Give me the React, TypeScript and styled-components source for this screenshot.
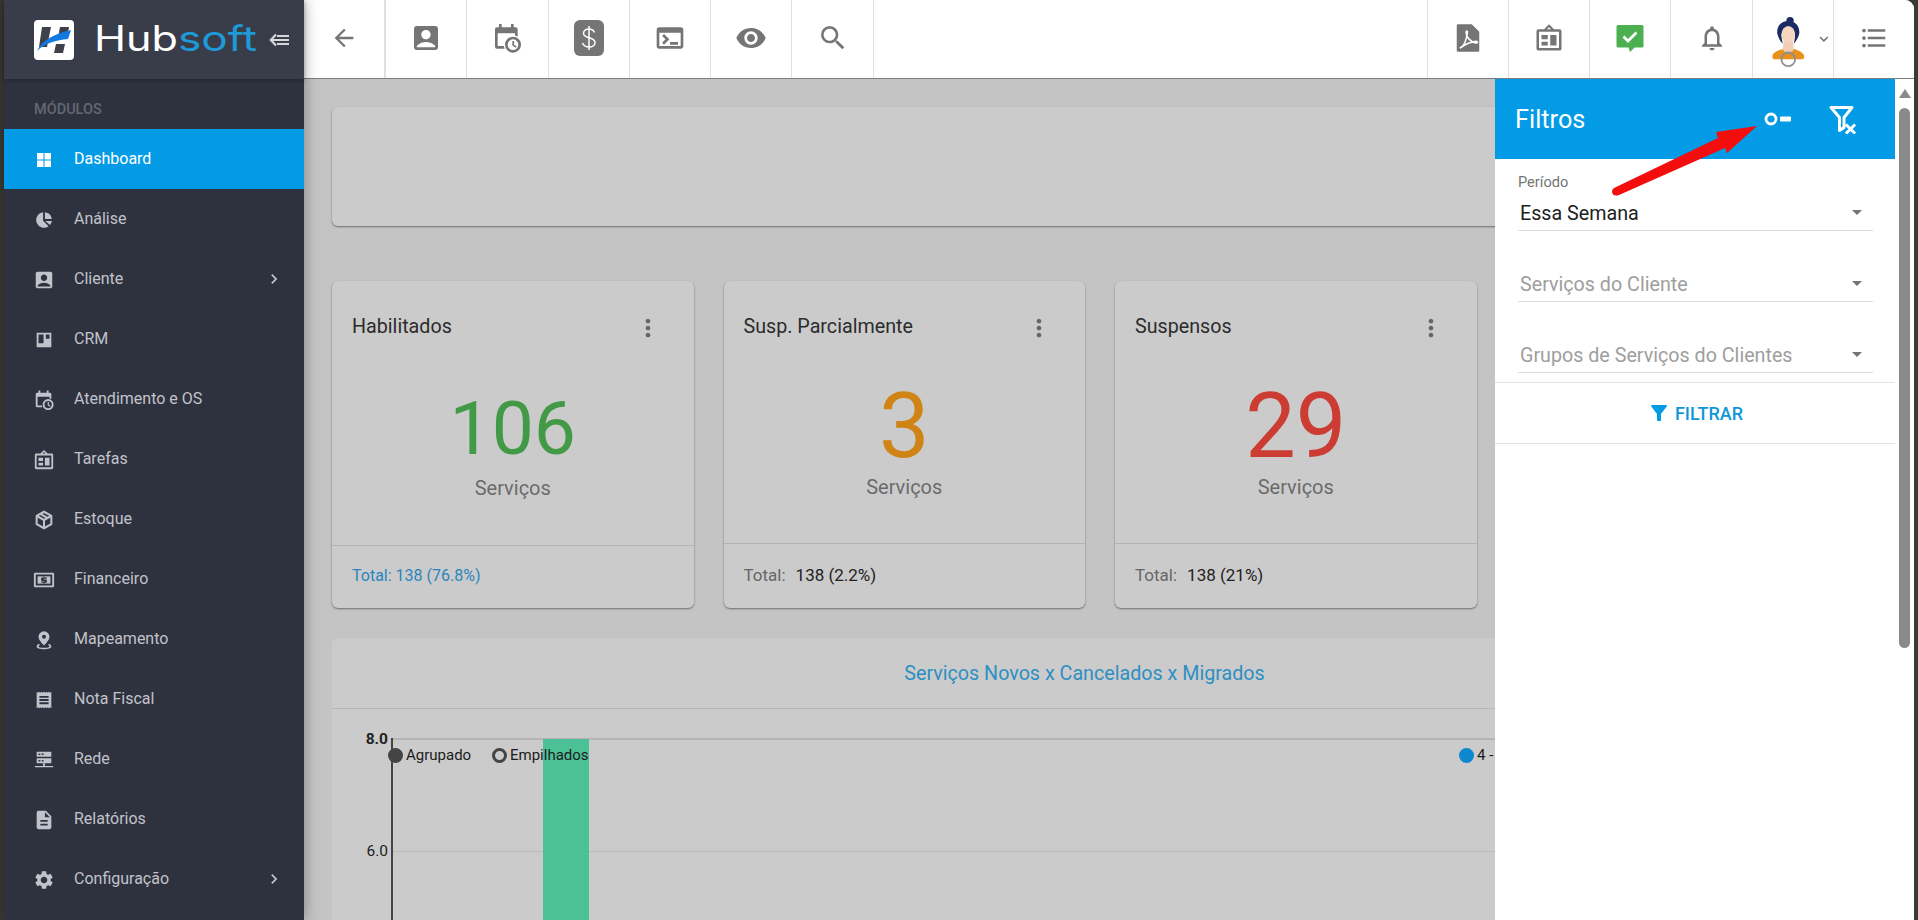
import React from "react";
import styled, { createGlobalStyle } from "styled-components";
import {
  MdArrowBack, MdAccountBox, MdTerminal, MdVisibility, MdSearch,
  MdNotificationsNone, MdFormatListBulleted, MdKeyboardArrowDown, MdChevronRight,
  MdDescription, MdSettings, MdFilterAlt, MdMoreVert, MdArrowDropDown,
} from "react-icons/md";

const Global = createGlobalStyle`
  html, body { margin: 0; padding: 0; height: 100%; overflow: hidden; background: #3a3a36; }
  * { box-sizing: border-box; }
  #root { height: 100%; font-family: Roboto, "Liberation Sans", sans-serif; }
`;

const Shell = styled.div`
  width: 1918px; height: 920px; display: flex; overflow: hidden; background: #3a3a36;
  padding: 0 4px;
`;
const Sidebar = styled.aside`
  width: 300px; flex: none; height: 920px; background: #2e323f; position: relative; z-index: 3;
  box-shadow: 0 0 14px rgba(0,0,0,.35); display: flex; flex-direction: column;
`;
const Brand = styled.div`
  height: 79px; flex: none; background: #393d4a; display: flex; align-items: center; padding-left: 30px;
  box-shadow: 0 1px 4px rgba(0,0,0,.3);
`;
const Collapse = styled.div`margin-left: 11px; margin-top: 1px; display: flex;`;
const SectionLabel = styled.div`
  height: 50px; padding: 23px 0 0 30px; font-size: 14.5px; line-height: 16px; font-weight: 500; color: #646772;
`;
const NavItem = styled.div<{ $active?: boolean }>`
  height: 60px; flex: none; display: flex; align-items: center; padding-left: 29px; padding-right: 20px;
  background: ${(p) => (p.$active ? "#039be5" : "transparent")};
  color: ${(p) => (p.$active ? "#fff" : "#c1c3ca")};
  font-size: 16px;
  svg.nav { width: 22px; height: 22px; flex: none; margin-top: 2px; }
`;
const NavText = styled.span`margin-left: 19px; flex: 1; position: relative; top: -1px;`;

const Main = styled.div`flex: 1; min-width: 0; display: flex; flex-direction: column; background: #fff; border-top-right-radius: 9px; overflow: hidden;`;
const Topbar = styled.header`
  height: 79px; flex: none; display: flex; background: #fff; border-bottom: 1px solid #7d7d7d;
`;
const TopCell = styled.div<{ $w?: number; $thick?: boolean }>`
  width: ${(p) => p.$w ?? 81.3}px; flex: none; height: 100%; display: flex; align-items: center; justify-content: center;
  border-right: ${(p) => (p.$thick ? 2 : 1)}px solid #e0e0e0; color: #757575; padding-bottom: 2px;
`;
const AvatarCell = styled(TopCell)`
  justify-content: flex-start; padding: 0 0 0 17px;
  svg:first-child { margin-top: 6px; }
  svg + svg { margin-left: 9px; }
`;
const TopSpacer = styled.div`flex: 1; border-right: 1px solid #e0e0e0;`;
const LastCell = styled.div`width: 80px; flex: none; display: flex; align-items: center; justify-content: center; color: #757575; padding-bottom: 2px;`;

const Body = styled.div`flex: 1; display: flex; min-height: 0;`;
const Content = styled.div`
  flex: 1; min-width: 0; position: relative; background: #c4c4c4; overflow: hidden; padding: 28px 0 0 28px;
`;
const Card = styled.section`
  background: #cbcbcb; border-radius: 6px; box-shadow: 0 1px 2px rgba(0,0,0,.45);
`;
const EmptyCard = styled(Card)`height: 119px; width: 1560px;`;
const CardRow = styled.div`display: flex; gap: 30px; margin-top: 55px;`;
const StatCard = styled(Card)`width: 361.5px; height: 327px; display: flex; flex-direction: column;`;
const StatHead = styled.div`height: 90px; flex: none; padding: 35px 20px 0 20px; display: flex; justify-content: space-between; align-items: flex-start;`;
const StatTitle = styled.div`font-size: 19.7px; line-height: 22px; color: #2c2c2c;`;
const Dots = styled.div`color: #666; margin-right: 12px; margin-top: -2px; display: flex;`;
const StatBody = styled.div`flex: 1; display: flex; flex-direction: column; align-items: center;`;
const StatValue = styled.div<{ $color: string; $size: number; $top: number }>`
  font-size: ${(p) => p.$size}px; line-height: 88px; font-weight: 400; color: ${(p) => p.$color}; margin-top: ${(p) => p.$top}px;
`;
const StatUnit = styled.div`font-size: 20px; line-height: 24px; color: #6b6b6b; margin-top: 4px;`;
const StatFoot = styled.div<{ $link?: boolean }>`
  height: ${(p) => (p.$link ? 63 : 65)}px; flex: none; border-top: 1px solid #b3b3b3;
  padding: ${(p) => (p.$link ? 21 : 22)}px 20px 0; font-size: ${(p) => (p.$link ? 16 : 17)}px; line-height: 18px;
  color: ${(p) => (p.$link ? "#2a86bd" : "#222")};
  span { color: #666; margin-right: 10px; }
`;
const ChartCard = styled(Card)`width: 1560px; height: 400px; margin-top: 30px; box-shadow: none;`;
const ChartHead = styled.div`
  height: 71px; border-bottom: 1px solid #b6b6b6; font-size: 19.7px; color: #2e8fc2; display: flex; align-items: center; justify-content: center; padding-right: 55px;
`;
const Plot = styled.div`position: relative; height: 330px; margin-top: -1px;`;
const GridLine = styled.div<{ $top: number; $major?: boolean }>`
  position: absolute; left: 60px; right: 0; top: ${(p) => p.$top}px; border-top: ${(p) => (p.$major ? 2 : 1)}px solid ${(p) => (p.$major ? "#b5b5b5" : "#b9b9b9")};
`;
const AxisLabel = styled.div<{ $top: number; $bold?: boolean }>`
  position: absolute; right: calc(100% - 56px); top: ${(p) => p.$top}px; font-size: 15.5px; line-height: 18px; color: #222; font-weight: ${(p) => (p.$bold ? 700 : 400)};
`;
const Axis = styled.div`position: absolute; left: 59px; top: 30px; bottom: 0; width: 2px; background: #444;`;
const Bar = styled.div`position: absolute; left: 211px; width: 46px; top: 31px; bottom: 0; background: #4cc198;`;
const Legend = styled.div<{ $left: number }>`
  position: absolute; left: ${(p) => p.$left}px; top: 38px; display: flex; align-items: center; gap: 3px; font-size: 15px; line-height: 18px; color: #1c1c1c; white-space: nowrap;
`;
const Dot = styled.i<{ $fill?: string; $ring?: boolean }>`
  width: 15px; height: 15px; border-radius: 50%; display: block; background: ${(p) => (p.$ring ? "transparent" : p.$fill)};
  border: ${(p) => (p.$ring ? "3px solid #444" : "none")};
`;

const Panel = styled.aside`
  position: absolute; top: 0; right: 0; width: 400px; bottom: 0; background: #fff; display: flex; flex-direction: column;
`;
const PanelHead = styled.div`
  height: 80px; flex: none; background: #039be5; color: #fff; display: flex; align-items: center; padding-left: 20px; font-size: 25.300px;
`;
const PanelTitle = styled.div`flex: 1;`;
const PanelIcon = styled.div<{ $mr: number }>`display: flex; margin-right: ${(p) => p.$mr}px;`;
const Form = styled.div`padding: 0 22px 0 23px;`;
const Field = styled.div<{ $h: number }>`
  height: ${(p) => p.$h}px; border-bottom: 1px solid #dcdcdc; position: relative; display: flex; flex-direction: column; justify-content: flex-end;
`;
const FieldLabel = styled.div`font-size: 14.600px; line-height: 16px; color: #757575; position: absolute; top: 15px; left: 0;`;
const FieldValue = styled.div<{ $muted?: boolean }>`
  font-size: 19.700px; line-height: 22px; padding: 0 0 5px 2px; color: ${(p) => (p.$muted ? "#9e9e9e" : "#212121")};
`;
const Caret = styled.div`position: absolute; right: 4px; bottom: 6px; color: #757575; display: flex;`;
const FilterBtn = styled.div`
  margin-top: 9px; height: 62px; border-top: 1px solid #e4e4e4; border-bottom: 1px solid #e4e4e4; display: flex; align-items: center; justify-content: center; gap: 4px;
  color: #0f96d8; font-size: 18px; font-weight: 500;
  svg { color: #039be5; }
`;

const Scroll = styled.div`width: 19px; flex: none; background: #fff; display: flex; flex-direction: column; align-items: center; padding-top: 10px;`;
const ScrollUp = styled.div`width: 0; height: 0; border-left: 6px solid transparent; border-right: 6px solid transparent; border-bottom: 9px solid #8a8a8a;`;
const Thumb = styled.div`width: 11px; height: 540px; margin-top: 10px; background: #8a8a8a; border-radius: 6px;`;

const ArrowLayer = styled.svg`position: absolute; left: 0; top: 0; z-index: 10; pointer-events: none;`;

const CalClock = ({ size = 30 }: { size?: number }) => (
  <svg className="nav" width={size} height={size} viewBox="0 0 24 24" fill="currentColor">
    <path d="M6 1.500h2V4h7V1.500h2V4h1.500A1.500 1.500 0 0 1 20 5.500V11a7 7 0 0 0-2-.6V8.500H5V18h4.600c.1.700.4 1.400.7 2H4.500A1.500 1.500 0 0 1 3 18.500v-13A1.500 1.500 0 0 1 4.500 4H6z" />
    <path fillRule="evenodd" d="M16.500 11a6 6 0 1 0 0 12 6 6 0 0 0 0-12zm0 2a4 4 0 1 1 0 8 4 4 0 0 1 0-8z" />
    <path d="M16 14.200h1.300v2.900l2 1.300-.7 1-2.600-1.700z" />
  </svg>
);
const Tasks = ({ size = 30 }: { size?: number }) => (
  <svg className="nav" width={size} height={size} viewBox="0 0 24 24" fill="currentColor">
    <path fillRule="evenodd" d="M12 1l4 4h4.500A1.500 1.500 0 0 1 22 6.500v14a1.500 1.500 0 0 1-1.500 1.500h-17A1.500 1.500 0 0 1 2 20.500v-14A1.500 1.500 0 0 1 3.500 5H8zm0 2.400L10.400 5h3.200zM4 7v13h16V7z" />
    <path d="M6 9.500h5V13H6zM6 15h5v3H6zM13 9.500h5V18h-5z" />
  </svg>
);
const Money = () => (
  <svg className="nav" viewBox="0 0 24 24" fill="currentColor">
    <path fillRule="evenodd" d="M2.500 4h19A1.500 1.500 0 0 1 23 5.500v13a1.500 1.500 0 0 1-1.500 1.500h-19A1.500 1.500 0 0 1 1 18.500v-13A1.500 1.500 0 0 1 2.500 4zM3 6v12h18V6z" />
    <path d="M5 8h14v8H5z" />
    <path fill="#2e323f" d="M11.300 8.500h1.400v.9H15v1.300h-3.600v.7h3a.7.7 0 0 1 .7.7v2.200a.7.7 0 0 1-.7.700h-1.700v.9h-1.400v-.9H9v-1.300h3.600v-.7h-3a.7.7 0 0 1-.7-.7v-2.200a.7.7 0 0 1 .7-.7h1.700z" />
  </svg>
);
const DashIcon = () => (
  <svg className="nav" viewBox="0 0 22 22" fill="currentColor">
    <path d="M4 4h6.500v6.500H4zM11.500 4H18v6.500h-6.500zM4 11.500h6.500V18H4zM11.500 11.500H18V18h-6.500z" />
  </svg>
);
const PieIcon = () => (
  <svg className="nav" viewBox="0 0 24 24" fill="currentColor">
    <path d="M13 3.500a8.500 8.500 0 0 1 7.500 7.500H13z" />
    <path d="M11 3.500v9.300l6 6A8.500 8.500 0 1 1 11 3.500z" />
    <path d="M13.500 13h7a8.500 8.500 0 0 1-2 4.500z" />
  </svg>
);
const BoardIcon = () => (
  <svg className="nav" viewBox="0 0 24 24" fill="currentColor">
    <path fillRule="evenodd" d="M4 4h16v16H4zM6 6v9.500h5.500V6zM14 6v4.500h4V6z" />
  </svg>
);
const BoxIcon = () => (
  <svg className="nav" viewBox="0 0 24 24" fill="none" stroke="currentColor" strokeWidth="2.200" strokeLinejoin="round">
    <path d="M12 3l8 4.500v9L12 21l-8-4.500v-9z" />
    <path d="M4 7.500l8 4.500 8-4.500M12 12v9M8 5.300l8 4.600" />
  </svg>
);
const PinIcon = () => (
  <svg className="nav" viewBox="0 0 24 24" fill="currentColor">
    <path fillRule="evenodd" d="M12 2.500a6 6 0 0 0-6 6c0 4 6 9.500 6 9.500s6-5.500 6-9.500a6 6 0 0 0-6-6zm0 3.800a2.200 2.200 0 1 1 0 4.400 2.200 2.200 0 0 1 0-4.400z" />
    <path d="M6.500 16c-1.500.8-2.500 1.800-2.500 3 0 2 3.500 3 8 3s8-1 8-3c0-1.200-1-2.200-2.500-3l-1 1.500c.9.500 1.500 1 1.500 1.500 0 .8-2.500 1.500-6 1.500s-6-.7-6-1.500c0-.5.600-1 1.500-1.500z" />
  </svg>
);
const InvoiceIcon = () => (
  <svg className="nav" viewBox="0 0 24 24" fill="currentColor">
    <path fillRule="evenodd" d="M4 3l1.300 1L6.600 3l1.300 1 1.300-1 1.400 1 1.400-1 1.400 1 1.300-1 1.300 1 1.300-1 1.300 1L20 3v18l-1.300-1-1.300 1-1.300-1-1.300 1-1.300-1-1.400 1-1.400-1-1.400 1-1.300-1-1.300 1-1.300-1L4 21zM7 7.500v2h10v-2zM7 11v2h10v-2zM7 14.500v2h10v-2z" />
  </svg>
);
const ServerIcon = () => (
  <svg className="nav" viewBox="0 0 24 24" fill="currentColor">
    <path fillRule="evenodd" d="M4 3h16v5.500H4zM6 5v1.500h2V5zM9.500 5v1.500h2V5zM4 10h16v5.500H4zM6 12v1.500h2V12zM9.500 12v1.500h2V12z" />
    <path d="M11 15.500h2v3h9V20H2v-1.500h9z" />
  </svg>
);

const FilterOff = () => (
  <svg width="30" height="30" viewBox="0 0 30 30" fill="none" stroke="#fff" strokeWidth="3">
    <path d="M3 3.500h21l-8 10v10l-4.500 3V13.500z" strokeLinejoin="round" />
    <path d="M19 21.500l7 7M26 21.500l-7 7" strokeLinecap="square" />
  </svg>
);
const KeyIcon = () => (
  <svg width="30" height="16" viewBox="0 0 30 16" fill="none">
    <circle cx="7" cy="8" r="5" stroke="#fff" strokeWidth="2.800" />
    <rect x="16" y="5.500" width="11" height="5" rx="1" fill="#fff" />
  </svg>
);
const DoubleArrow = () => (
  <svg width="20" height="14" viewBox="0 0 20 14" fill="none" stroke="#d5d6da" strokeWidth="2.200">
    <path d="M7 1.500L1.800 7 7 12.500M2 7h18M8 3h12M8 11h12" />
  </svg>
);
const Logo = () => (
  <svg width="224" height="54" viewBox="0 -6 224 54" style={{ display: "block" }}>
    <rect x="0" y="1" width="40" height="40" rx="4" fill="#fff" />
    <path d="M8 8h9l-4 20H5zM26 8h9l-1.500 8h-9zM22 25h9l-2 9h-9z" fill="#3f414a" />
    <path d="M3 32C9 20 21 15 37 11l-3 9C22 21 11 24 3 32z" fill="#1179e0" />
    <text x="60" y="32" fontFamily="Inter, Roboto, sans-serif" fontWeight="400" fontSize="35" fill="#fff" textLength="84" lengthAdjust="spacingAndGlyphs">Hub</text>
    <text x="144" y="32" fontFamily="Inter, Roboto, sans-serif" fontWeight="400" fontSize="35" fill="#1f9ad8" textLength="79" lengthAdjust="spacingAndGlyphs">soft</text>
  </svg>
);
const Avatar = () => (
  <svg width="37" height="52" viewBox="0 0 40 56">
    <path d="M3 42c2-4 10-6 12-7h10c3 1 10 3 12 7 1 3 0 4-1 5H4c-1-1-2-2-1-5z" fill="#e8921c" />
    <path d="M14 36c2 5 10 5 12 0l-1-9H15z" fill="#f3cdb3" />
    <circle cx="22" cy="4.500" r="4" fill="#1b2a63" />
    <path d="M20 5c8 0 13 6 12 14-1 4-3 8-6 11 1-5 2-9 1-12-1-3-4-4-7-4s-6 1-7 4c-1 3 0 7 1 12-3-3-5-7-6-11C7 11 12 5 20 5z" fill="#1b2a63" />
    <ellipse cx="20" cy="20" rx="7.500" ry="9.500" fill="#f6d5bf" />
    <circle cx="20" cy="47" r="7.500" fill="none" stroke="#8f8f8f" strokeWidth="2" />
  </svg>
);
const ChatOk = () => (
  <svg width="30" height="30" viewBox="0 0 30 30">
    <path d="M3 2h24a1.500 1.500 0 0 1 1.500 1.500V23a1.500 1.500 0 0 1-1.500 1.500h-7.500L15 29l-1.500-4.500H3A1.500 1.500 0 0 1 1.500 23V3.500A1.500 1.500 0 0 1 3 2z" fill="#4caf50" />
    <path d="M8.500 13.500l4.500 4.500 8.500-8.500" fill="none" stroke="#fff" strokeWidth="2.800" />
  </svg>
);
const PdfBox = () => (
  <svg width="30" height="30" viewBox="0 0 24 24" fill="#757575">
    <path d="M4 1h11l6 6v15a1 1 0 0 1-1 1H4a1 1 0 0 1-1-1V2a1 1 0 0 1 1-1z" />
    <path fill="none" stroke="#fff" strokeWidth="1.300" d="M5.500 20c3-1 5-5 6-12 .4-2-1-2-1-.5 0 4 4 8 8 8.500 1.300.1 1.300-1.300 0-1.300-3 0-8 2-13 5.300z" />
  </svg>
);
const DollarBox = () => (
  <svg width="30" height="36" viewBox="0 0 30 36">
    <rect x="0" y="0" width="30" height="36" rx="6" fill="#757575" />
    <path d="M15 6v24M20.500 12.500c-1-2.500-3-3.500-5.500-3.500-3 0-5.500 1.800-5.500 4.300 0 2.800 2.500 3.700 5.500 4.500 3 .8 6 2 6 5 0 2.700-2.800 4.200-6 4.200s-5.500-1.500-6.500-4" fill="none" stroke="#fff" strokeWidth="1.500" />
  </svg>
);

const nav: { label: string; icon: React.ReactNode; active?: boolean; more?: boolean }[] = [
  { label: "Dashboard", icon: <DashIcon />, active: true },
  { label: "Análise", icon: <PieIcon /> },
  { label: "Cliente", icon: <MdAccountBox className="nav" />, more: true },
  { label: "CRM", icon: <BoardIcon /> },
  { label: "Atendimento e OS", icon: <CalClock /> },
  { label: "Tarefas", icon: <Tasks /> },
  { label: "Estoque", icon: <BoxIcon /> },
  { label: "Financeiro", icon: <Money /> },
  { label: "Mapeamento", icon: <PinIcon /> },
  { label: "Nota Fiscal", icon: <InvoiceIcon /> },
  { label: "Rede", icon: <ServerIcon /> },
  { label: "Relatórios", icon: <MdDescription className="nav" /> },
  { label: "Configuração", icon: <MdSettings className="nav" />, more: true },
];

export default function App() {
  return (
    <>
      <Global />
      <Shell>
        <Sidebar>
          <Brand>
            <Logo />
            <Collapse><DoubleArrow /></Collapse>
          </Brand>
          <SectionLabel>MÓDULOS</SectionLabel>
          {nav.map((n) => (
            <NavItem key={n.label} $active={n.active}>
              {n.icon}
              <NavText>{n.label}</NavText>
              {n.more && <MdChevronRight size={20} />}
            </NavItem>
          ))}
        </Sidebar>
        <Main>
          <Topbar>
            <TopCell $thick $w={82}><MdArrowBack size={28} /></TopCell>
            <TopCell><MdAccountBox size={32} /></TopCell>
            <TopCell><CalClock size={32} /></TopCell>
            <TopCell><DollarBox /></TopCell>
            <TopCell><MdTerminal size={32} /></TopCell>
            <TopCell><MdVisibility size={32} /></TopCell>
            <TopCell><MdSearch size={32} /></TopCell>
            <TopSpacer />
            <TopCell><PdfBox /></TopCell>
            <TopCell><Tasks /></TopCell>
            <TopCell><ChatOk /></TopCell>
            <TopCell><MdNotificationsNone size={30} /></TopCell>
            <AvatarCell><Avatar /><MdKeyboardArrowDown size={18} /></AvatarCell>
            <LastCell><MdFormatListBulleted size={30} /></LastCell>
          </Topbar>
          <Body>
            <Content>
              <EmptyCard />
              <CardRow>
                <StatCard>
                  <StatHead><StatTitle>Habilitados</StatTitle><Dots><MdMoreVert size={28} /></Dots></StatHead>
                  <StatBody><StatValue $color="#439a46" $size={75} $top={13}>106</StatValue><StatUnit>Serviços</StatUnit></StatBody>
                  <StatFoot $link>Total: 138 (76.8%)</StatFoot>
                </StatCard>
                <StatCard>
                  <StatHead><StatTitle>Susp. Parcialmente</StatTitle><Dots><MdMoreVert size={28} /></Dots></StatHead>
                  <StatBody><StatValue $color="#d08415" $size={90} $top={12}>3</StatValue><StatUnit>Serviços</StatUnit></StatBody>
                  <StatFoot><span>Total:</span>138 (2.2%)</StatFoot>
                </StatCard>
                <StatCard>
                  <StatHead><StatTitle>Suspensos</StatTitle><Dots><MdMoreVert size={28} /></Dots></StatHead>
                  <StatBody><StatValue $color="#cc3c32" $size={90} $top={12}>29</StatValue><StatUnit>Serviços</StatUnit></StatBody>
                  <StatFoot><span>Total:</span>138 (21%)</StatFoot>
                </StatCard>
              </CardRow>
              <ChartCard>
                <ChartHead>Serviços Novos x Cancelados x Migrados</ChartHead>
                <Plot>
                  <GridLine $top={30} $major />
                  <GridLine $top={143} />
                  <Bar />
                  <Axis />
                  <AxisLabel $top={22} $bold>8.0</AxisLabel>
                  <AxisLabel $top={134}>6.0</AxisLabel>
                  <Legend $left={56}><Dot $fill="#444" />Agrupado</Legend>
                  <Legend $left={160}><Dot $ring />Empilhados</Legend>
                  <Legend $left={1127}><Dot $fill="#0d88d0" />4 - Novos</Legend>
                </Plot>
              </ChartCard>
              <Panel>
                <PanelHead>
                  <PanelTitle>Filtros</PanelTitle>
                  <PanelIcon $mr={34}><KeyIcon /></PanelIcon>
                  <PanelIcon $mr={37}><FilterOff /></PanelIcon>
                </PanelHead>
                <Form>
                  <Field $h={72}><FieldLabel>Período</FieldLabel><FieldValue>Essa Semana</FieldValue><Caret><MdArrowDropDown size={24} /></Caret></Field>
                  <Field $h={71}><FieldValue $muted>Serviços do Cliente</FieldValue><Caret><MdArrowDropDown size={24} /></Caret></Field>
                  <Field $h={71}><FieldValue $muted>Grupos de Serviços do Clientes</FieldValue><Caret><MdArrowDropDown size={24} /></Caret></Field>
                </Form>
                <FilterBtn><MdFilterAlt size={24} />FILTRAR</FilterBtn>
              </Panel>
            </Content>
            <Scroll><ScrollUp /><Thumb /></Scroll>
          </Body>
        </Main>
      </Shell>
      <ArrowLayer width="1918" height="920" viewBox="0 0 1918 920">
        <path d="M1614 188L1718 138L1716 132L1757 126L1727 153L1725 148L1619 195Q1613 197 1612 192Q1612 189 1614 188Z" fill="#f40d0d" />
      </ArrowLayer>
    </>
  );
}
